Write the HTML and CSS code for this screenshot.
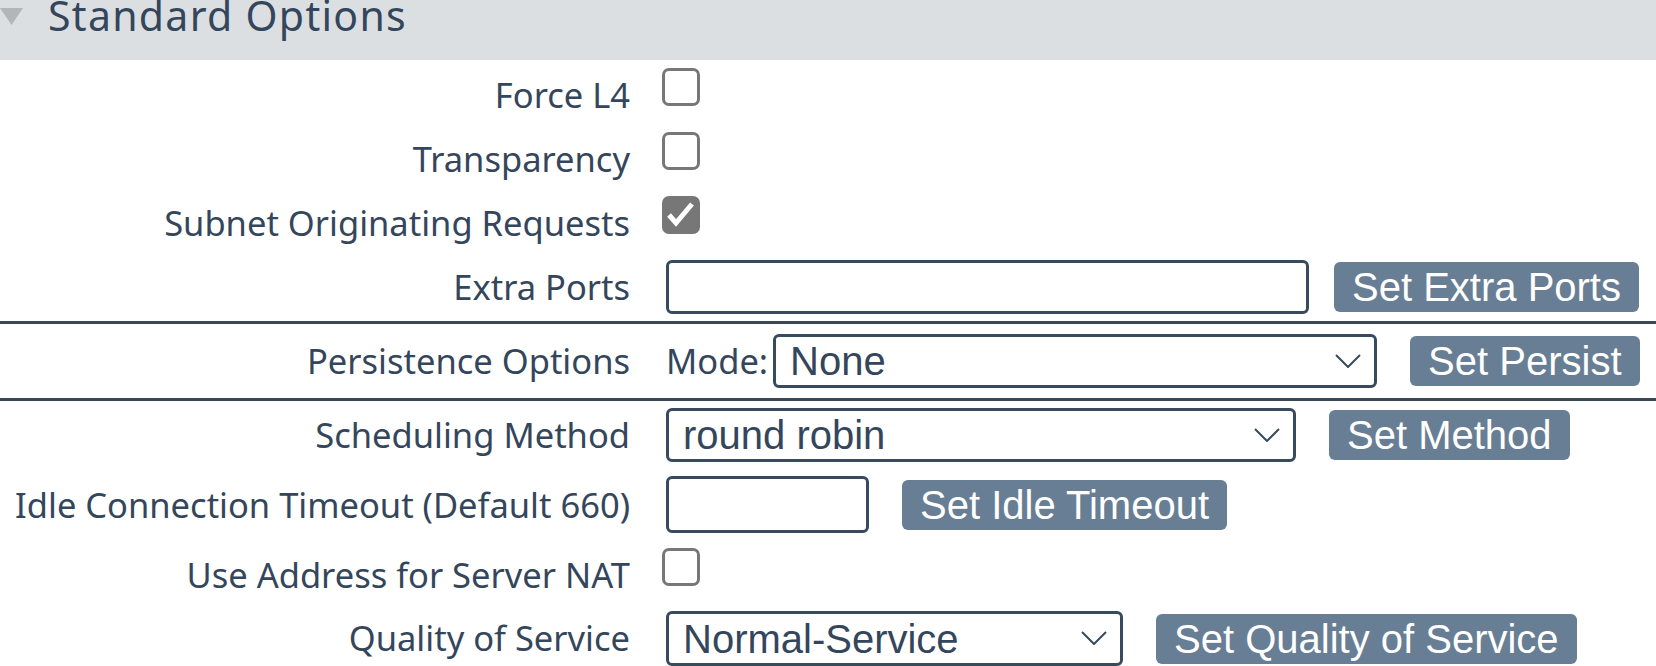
FILE: index.html
```html
<!DOCTYPE html>
<html>
<head>
  <title>Standard Options</title>
  <link rel="stylesheet" href="styles.css">
</head>
<body>
  <div class="panel-head">
    <svg class="caret" width="23" height="60" viewBox="0 0 23 60"><polygon points="0,8 23,8 11.5,25"/></svg>
    <h2 class="panel-title">Standard Options</h2>
  </div>

  <div class="group group-top">
    <div class="row">
      <label class="row-label">Force L4</label>
      <div class="row-ctrl"><span class="check"></span></div>
    </div>
    <div class="row">
      <label class="row-label">Transparency</label>
      <div class="row-ctrl"><span class="check"></span></div>
    </div>
    <div class="row">
      <label class="row-label">Subnet Originating Requests</label>
      <div class="row-ctrl">
        <span class="check on">
          <svg width="32" height="32" viewBox="0 0 32 32"><polyline points="4,16 11,24 27,5"/></svg>
        </span>
      </div>
    </div>
    <div class="row">
      <label class="row-label">Extra Ports</label>
      <div class="row-ctrl">
        <input type="text" class="field field-ports">
        <button class="btn btn-near">Set Extra Ports</button>
      </div>
    </div>
  </div>

  <div class="group group-persist">
    <div class="row">
      <label class="row-label">Persistence Options</label>
      <div class="row-ctrl">
        <span class="mode">Mode:</span>
        <div class="select-wrap">
          <select class="field field-persist"><option>None</option></select>
          <svg class="chevron" width="26" height="14" viewBox="0 0 26 14"><polyline points="1,1 13,13 25,1"/></svg>
        </div>
        <button class="btn">Set Persist</button>
      </div>
    </div>
  </div>

  <div class="group group-bottom">
    <div class="row">
      <label class="row-label">Scheduling Method</label>
      <div class="row-ctrl">
        <div class="select-wrap">
          <select class="field field-method"><option>round robin</option></select>
          <svg class="chevron" width="26" height="14" viewBox="0 0 26 14"><polyline points="1,1 13,13 25,1"/></svg>
        </div>
        <button class="btn">Set Method</button>
      </div>
    </div>
    <div class="row">
      <label class="row-label row-label-tall">Idle Connection Timeout (Default 660)</label>
      <div class="row-ctrl">
        <input type="text" class="field field-idle">
        <button class="btn">Set Idle Timeout</button>
      </div>
    </div>
    <div class="row row-short">
      <label class="row-label">Use Address for Server NAT</label>
      <div class="row-ctrl"><span class="check"></span></div>
    </div>
    <div class="row">
      <label class="row-label">Quality of Service</label>
      <div class="row-ctrl">
        <div class="select-wrap">
          <select class="field field-qos"><option>Normal-Service</option></select>
          <svg class="chevron" width="26" height="14" viewBox="0 0 26 14"><polyline points="1,1 13,13 25,1"/></svg>
        </div>
        <button class="btn">Set Quality of Service</button>
      </div>
    </div>
  </div>
</body>
</html>
```

FILE: styles.css
```css
body {
  margin: 0;
  background: #ffffff;
  font-family: 'Noto Sans', sans-serif;
  color: #34465b;
}

.panel-head {
  display: flex;
  height: 60px;
  background: #dcdfe1;
  overflow: hidden;
}

.caret {
  flex: none;
}

.caret polygon {
  fill: #b3b6b9;
}

.panel-title {
  margin: -5px 0 0 25px;
  font-size: 41px;
  font-weight: normal;
  line-height: 41px;
  letter-spacing: 1.3px;
  white-space: nowrap;
}

.group-top {
  padding: 3px 0 2px;
}

.group-persist {
  padding: 5px 0;
  border-top: 3px solid #3a4856;
  border-bottom: 3px solid #3a4856;
}

.group-bottom .row {
  padding: 7px 0;
}

.group-bottom .row-short {
  padding-bottom: 2px;
}

.row {
  display: flex;
  align-items: flex-start;
  padding: 5px 0;
}

.row-label {
  flex: none;
  width: 630px;
  text-align: right;
  font-size: 34.5px;
  line-height: 54px;
  white-space: nowrap;
}

.row-label-tall {
  line-height: 58px;
}

.row-ctrl {
  display: flex;
  align-items: center;
  margin-left: 36px;
}

.check {
  display: block;
  box-sizing: border-box;
  width: 38px;
  height: 38px;
  margin-left: -4px;
  border: 3px solid #777777;
  border-radius: 7px;
  background: #ffffff;
}

.check.on {
  background: #777777;
}

.check svg {
  display: block;
}

.check polyline {
  fill: none;
  stroke: #ffffff;
  stroke-width: 5;
}

.mode {
  font-size: 34.5px;
  line-height: 54px;
  margin-right: 5px;
}

.field {
  box-sizing: border-box;
  height: 54px;
  padding: 0 14px;
  border: 3px solid #374a5e;
  border-radius: 6px;
  background: #ffffff;
  color: #34465b;
  font-family: 'Liberation Sans', Arial, sans-serif;
  font-size: 40px;
  outline: none;
}

select.field {
  appearance: none;
  -webkit-appearance: none;
}

.select-wrap {
  position: relative;
  display: flex;
}

.chevron {
  position: absolute;
  right: 16px;
  top: 20px;
}

.chevron polyline {
  fill: none;
  stroke: #374a5e;
  stroke-width: 2;
}

.field-ports {
  width: 643px;
}

.field-persist {
  width: 604px;
}

.field-method {
  width: 630px;
}

.field-idle {
  width: 203px;
  height: 57px;
}

.field-qos {
  width: 457px;
  height: 55px;
}

.btn {
  height: 50px;
  margin-left: 33px;
  padding: 0 18px;
  border: 0;
  border-radius: 6px;
  background: #687e94;
  color: #ffffff;
  font-family: 'Liberation Sans', Arial, sans-serif;
  font-size: 40px;
  line-height: 50px;
}

.btn-near {
  margin-left: 25px;
}
```
